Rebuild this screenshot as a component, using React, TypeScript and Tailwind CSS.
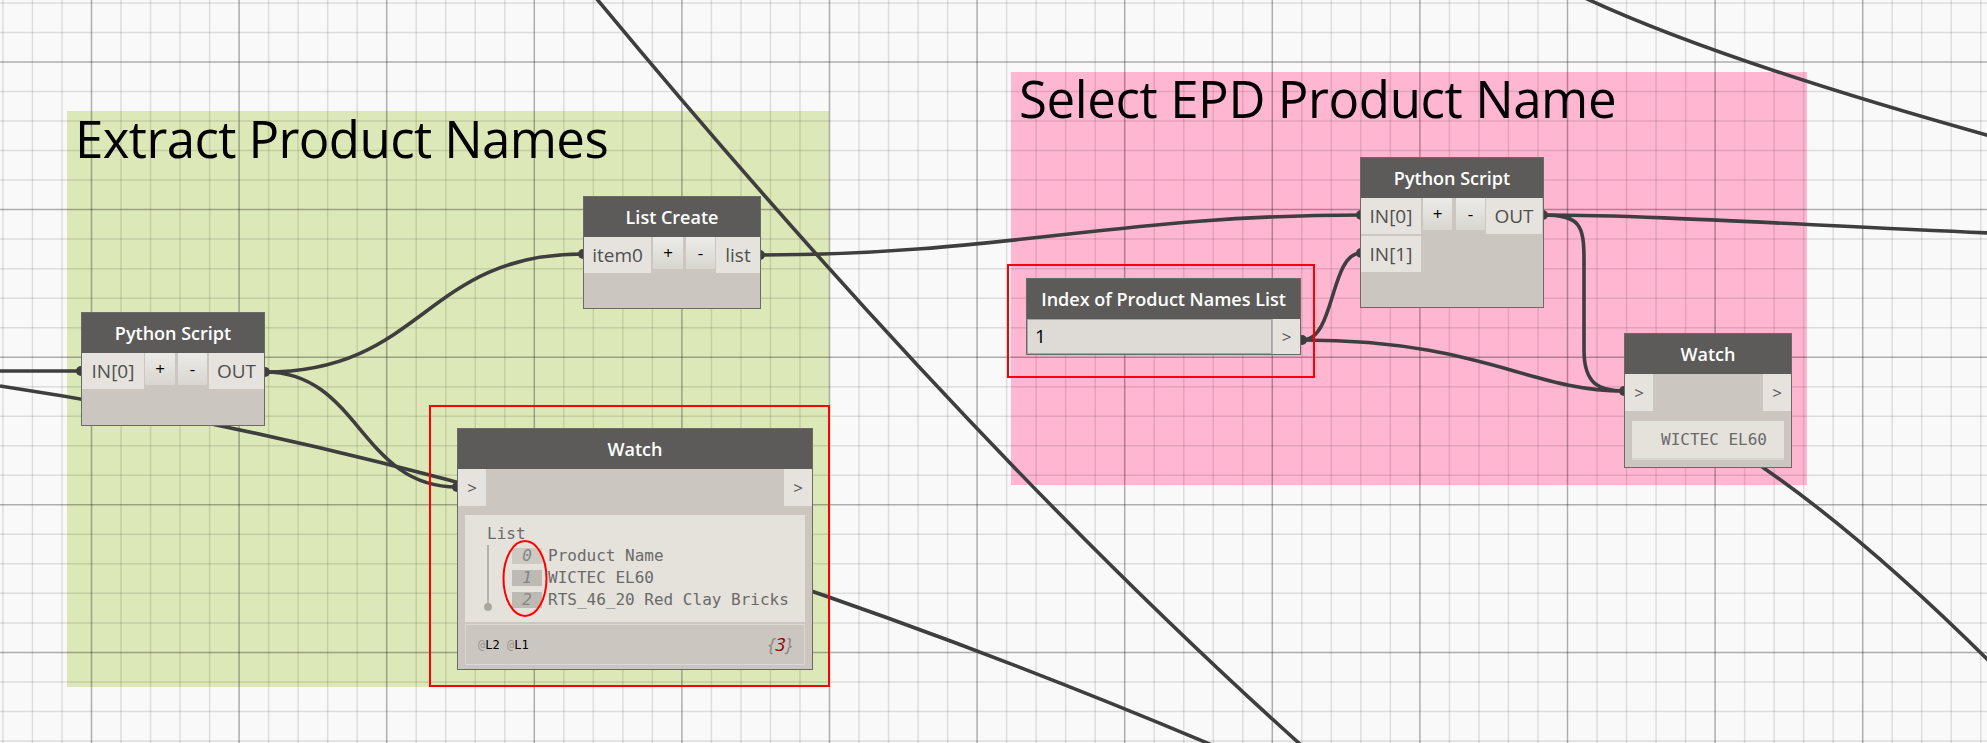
import type { ReactNode } from "react";

const minorStep = 29.52;
const gridX = Array.from({ length: 72 }, (_, i) => i - 4);
const gridY = Array.from({ length: 28 }, (_, i) => i - 3);

const wires = [
  "M0 371 L81 371",
  "M265 372 C424 372, 424 254, 583 254",
  "M265 372 C360 372, 360 487, 457 487",
  "M0 386 Q560 470 1212 745",
  "M596 -2 Q967 445 1301 745",
  "M760 255 C1000 255, 1120 215, 1361 215",
  "M1303 340 C1335 340, 1330 253, 1361 253",
  "M1303 340 C1480 340, 1530 391, 1624 391",
  "M1543 215 C1580 215, 1584 225, 1584 260 L1584 350 C1584 385, 1600 391, 1624 391",
  "M1543 215 C1650 215, 1800 225, 1990 233",
  "M1740 452 Q1851 524 1990 662",
  "M1585 -2 Q1718 60 1990 136",
];

const portDots = [
  [81, 371],
  [265, 372],
  [583, 254],
  [760, 255],
  [457, 487],
  [1361, 215],
  [1361, 253],
  [1543, 215],
  [1302, 340],
  [1624, 391],
];

const sans = "font-['Open_Sans','Noto_Sans',sans-serif]";
const mono = "font-['DejaVu_Sans_Mono','Liberation_Mono',monospace]";

export default function App() {
  return (
    <div className={`relative h-[743px] w-[1987px] overflow-hidden bg-[#f9f9f9] ${sans}`}>
      {/* groups */}
      <div className="absolute left-[67px] top-[111px] h-[576px] w-[762px] bg-[#dde8b8]">
        <p className="ml-[8px] mt-[2px] text-[51px] leading-[50px] tracking-[-0.6px] text-black">Extract Product Names</p>
      </div>
      <div className="absolute left-[1011px] top-[72px] h-[413px] w-[796px] bg-[#ffb6d1]">
        <p className="ml-[8px] mt-[1px] text-[51px] leading-[50px] tracking-[-0.4px] text-black">Select EPD Product Name</p>
      </div>

      <GridLayer />

      <svg className="absolute inset-0" width={1987} height={743}>
        {wires.map((d) => (
          <path key={d} d={d} fill="none" stroke="#3e3e3e" strokeWidth={3.6} />
        ))}
        {portDots.map(([x, y]) => (
          <circle key={`${x}-${y}`} cx={x} cy={y} r={5} fill="#3e3e3e" />
        ))}
      </svg>

      {/* red highlight frames */}
      <div className="absolute left-[429px] top-[405px] h-[282px] w-[401px] border-2 border-[#ff0000]" />
      <div className="absolute left-[1007px] top-[264px] h-[114px] w-[308px] border-2 border-[#ff0000]" />

      {/* left python script */}
      <NodeShell className="left-[81px] top-[312px] h-[114px] w-[184px]" title="Python Script">
        <div className="flex items-start">
          <PortLabel className="w-[62px]">IN[0]</PortLabel>
          <PlusMinus className="ml-[1px] w-[30px]">+</PlusMinus>
          <PlusMinus className="ml-[3px] w-[29px]">-</PlusMinus>
          <PortLabel className="ml-[2px] w-[55px]">OUT</PortLabel>
        </div>
      </NodeShell>

      {/* list create */}
      <NodeShell className="left-[583px] top-[196px] h-[113px] w-[178px]" title="List Create">
        <div className="flex items-start">
          <PortLabel className="w-[67px]">item0</PortLabel>
          <PlusMinus className="ml-[2px] w-[30px]">+</PlusMinus>
          <PlusMinus className="ml-[3px] w-[29px]">-</PlusMinus>
          <PortLabel className="ml-[1px] w-[44px]">list</PortLabel>
        </div>
      </NodeShell>

      {/* watch with list */}
      <NodeShell className="left-[457px] top-[428px] h-[242px] w-[356px]" title="Watch">
        <WatchPorts />
        <div className="relative mx-[7px] mt-[9px] h-[107px] bg-[#e5e2dc]">
          <p className={`absolute left-[22px] top-[8px] text-[16px] leading-[22px] text-[#6a6a6a] ${mono}`}>List</p>
          <div className="absolute left-[22px] top-[30px] h-[62px] w-[2px] bg-[#b4b0aa]" />
          <div className="absolute left-[19px] top-[88px] h-[8px] w-[8px] rounded-full bg-[#aaa6a0]" />
          <div className={`absolute left-[47px] top-[33px] flex flex-col gap-[6px] text-[16px] ${mono}`}>
            {["Product Name", "WICTEC EL60", "RTS_46_20 Red Clay Bricks"].map((item, i) => (
              <div key={item} className="flex h-[16px] items-center">
                <span
                  className={`h-[16px] w-[30px] text-center italic leading-[16px] text-[#858585] ${
                    i === 0 ? "bg-[#cdc9c3]" : "bg-[#bdb9b3]"
                  }`}
                >
                  {i}
                </span>
                <span className="ml-[6px] whitespace-nowrap leading-[16px] text-[#6a6a6a]">{item}</span>
              </div>
            ))}
          </div>
        </div>
        <div className="mx-[7px] mt-[2px] flex h-[41px] items-center justify-between border border-[#dcd9d3] px-[12px]">
          <span className={`text-[12px] ${mono}`}>
            <span className="text-[#9a9690]">@</span>
            <span className="text-black">L2 </span>
            <span className="text-[#9a9690]">@</span>
            <span className="text-black">L1</span>
          </span>
          <span className="text-[19px] italic text-[#8a8680]">
            {"{"}
            <span className="text-[#8b0000]">3</span>
            {"}"}
          </span>
        </div>
      </NodeShell>

      {/* number input */}
      <NodeShell className="left-[1026px] top-[278px] h-[77px] w-[275px]" title="Index of Product Names List">
        <div className="flex h-[36px]">
          <div className="flex flex-1 items-center border border-[#a9a6a1] bg-[#dedbd6] pl-[7px] text-[19px] text-black">1</div>
          <div className="flex w-[28px] items-center justify-center border-l border-[#b2b0b6] bg-[#e5e2dd] text-[17px] text-[#555]">
            &gt;
          </div>
        </div>
      </NodeShell>

      {/* right python script */}
      <NodeShell className="left-[1360px] top-[157px] h-[151px] w-[184px]" title="Python Script">
        <div className="flex items-start">
          <PortLabel className="w-[60px]">IN[0]</PortLabel>
          <PlusMinus className="ml-[2px] w-[29px]">+</PlusMinus>
          <PlusMinus className="ml-[4px] w-[29px]">-</PlusMinus>
          <PortLabel className="ml-[1px] w-[56px]">OUT</PortLabel>
        </div>
        <PortLabel className="mt-[2px] w-[60px]">IN[1]</PortLabel>
      </NodeShell>

      {/* right watch */}
      <NodeShell className="left-[1624px] top-[333px] h-[135px] w-[168px]" title="Watch">
        <WatchPorts />
        <div className="mx-[7px] mt-[10px] flex h-[39px] items-center border-b-2 border-[#d8d5d0] bg-[#e5e2dc] pl-[29px]">
          <span className={`text-[16px] text-[#6a6a6a] ${mono}`}>WICTEC EL60</span>
        </div>
      </NodeShell>

      <svg className="pointer-events-none absolute inset-0" width={1987} height={743}>
        <ellipse cx={525} cy={578.5} rx={21.5} ry={37.5} fill="none" stroke="#ff0000" strokeWidth={2} />
      </svg>
    </div>
  );
}

function GridLayer() {
  return (
    <svg className="absolute inset-0" width={1987} height={743}>
      {gridX.map((k) => {
        const x = 91.5 + k * minorStep;
        const major = ((k % 5) + 5) % 5 === 0;
        return (
          <line
            key={`v${k}`}
            x1={x}
            x2={x}
            y1={0}
            y2={743}
            stroke="#000"
            strokeOpacity={major ? 0.3 : 0.11}
            strokeWidth={1.5}
          />
        );
      })}
      {gridY.map((k) => {
        const y = 62 + k * minorStep;
        const major = ((k % 5) + 5) % 5 === 0;
        return (
          <line
            key={`h${k}`}
            x1={0}
            x2={1987}
            y1={y}
            y2={y}
            stroke="#000"
            strokeOpacity={major ? 0.3 : 0.11}
            strokeWidth={1.5}
          />
        );
      })}
    </svg>
  );
}

function NodeShell({ className, title, children }: { className: string; title: string; children: ReactNode }) {
  return (
    <div className={`absolute flex flex-col border border-[#6c6a67] bg-[#cbc7c0] ${className}`}>
      <div className="flex h-[40px] shrink-0 items-center justify-center bg-[#5c5b59] text-[18px] font-semibold text-white">
        {title}
      </div>
      {children}
    </div>
  );
}

function PortLabel({ className, children }: { className: string; children: ReactNode }) {
  return (
    <div className={`flex h-[36px] items-center justify-center bg-[#e6e3de] text-[19px] text-[#4f4f4f] ${className}`}>
      {children}
    </div>
  );
}

function PlusMinus({ className, children }: { className: string; children: ReactNode }) {
  return (
    <div
      className={`flex h-[32px] items-center justify-center bg-gradient-to-b from-[#ecebe7] to-[#d9d6d0] text-[17px] text-black ${className}`}
    >
      {children}
    </div>
  );
}

function WatchPorts() {
  return (
    <div className="flex h-[37px] justify-between">
      <div className="flex w-[28px] items-center justify-center bg-[#e6e3de] text-[17px] text-[#555]">&gt;</div>
      <div className="flex w-[28px] items-center justify-center bg-[#e6e3de] text-[17px] text-[#555]">&gt;</div>
    </div>
  );
}
